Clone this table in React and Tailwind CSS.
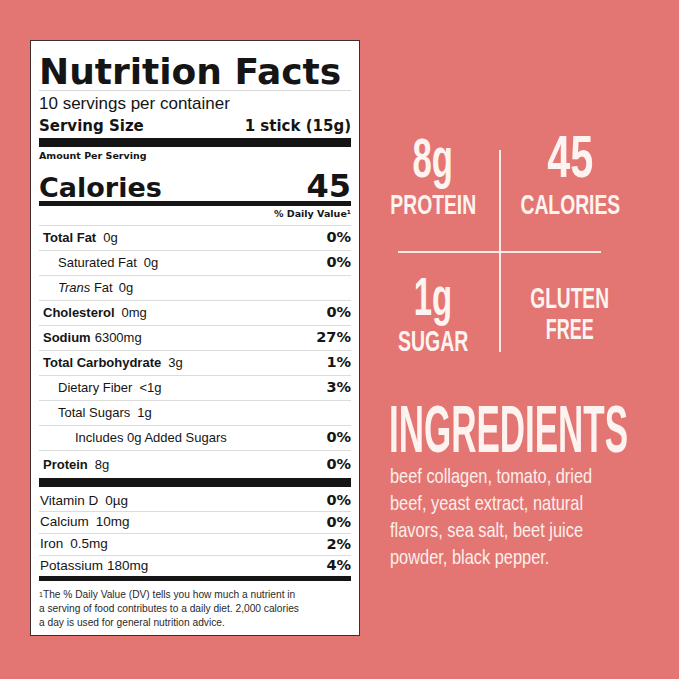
import React from 'react';

const heavy = "font-['DejaVu_Sans',sans-serif] font-bold";
const reg = "font-['Liberation_Sans',Arial,sans-serif]";

const nutrients = [
    { label: 'Total Fat', value: '0g', dv: '0%', bold: true },
    { label: 'Saturated Fat', value: '0g', dv: '0%', indent: 'pl-[19px]' },
    { label: 'Trans', value: '0g', dv: '', indent: 'pl-[19px]', trans: true },
    { label: 'Cholesterol', value: '0mg', dv: '0%', bold: true },
    { label: 'Sodium', value: '6300mg', dv: '27%', bold: true, tight: true },
    { label: 'Total Carbohydrate', value: '3g', dv: '1%', bold: true },
    { label: 'Dietary Fiber', value: '<1g', dv: '3%', indent: 'pl-[19px]' },
    { label: 'Total Sugars', value: '1g', dv: '', indent: 'pl-[19px]' },
    { label: 'Includes 0g Added Sugars', value: '', dv: '0%', indent: 'pl-[36px]' },
];

const vitamins = [
    { label: 'Vitamin D', value: '0µg', dv: '0%', row: 'h-[24px] pt-[4px]' },
    { label: 'Calcium', value: '10mg', dv: '0%', row: 'h-[22px] border-t border-[#dcdcdc]' },
    { label: 'Iron', value: '0.5mg', dv: '2%', row: 'h-[22px] border-t border-[#dcdcdc]' },
    { label: 'Potassium', value: '180mg', dv: '4%', row: 'h-[21px] border-t border-[#dcdcdc]', tight: true },
];

const NutrientRow = ({ item, rowClass }) => (
    <div className={`flex items-center justify-between border-t border-[#dcdcdc] ${rowClass}`}>
        <div className={`${reg} text-[13px] ${item.indent || 'pl-1'}`}>
            {item.trans ? (
                <>
                    <span className="italic">Trans</span> Fat<span className="ml-[6px]">{item.value}</span>
                </>
            ) : (
                <>
                    <span className={item.bold ? 'font-bold' : ''}>{item.label}</span>
                    {item.value && <span className={item.tight ? 'ml-[4px]' : 'ml-[7px]'}>{item.value}</span>}
                </>
            )}
        </div>
        <div className={`${heavy} text-[14.5px]`}>{item.dv}</div>
    </div>
);

const NutritionLabel = () => (
    <div className="w-[330px] h-[596px] shrink-0 border border-[#3d2f2f] bg-white px-2 pt-[13px] text-[#151515]">
        <h1 className={`${heavy} text-[36px] leading-[36px] border-b border-[#d8d8d8]`}>Nutrition Facts</h1>
        <p className={`${reg} text-[17px] leading-[20px] mt-[3px]`}>10 servings per container</p>
        <div className={`${heavy} flex justify-between text-[15px] leading-[18px] mt-[3px]`}>
            <span>Serving Size</span>
            <span>1 stick (15g)</span>
        </div>
        <div className="h-[9px] bg-[#151515] mt-[3px]" />
        <p className={`${heavy} text-[9.5px] leading-[12px] mt-[3px]`}>Amount Per Serving</p>
        <div className={`${heavy} flex justify-between items-baseline mt-[9px]`}>
            <span className="text-[27px] leading-none">Calories</span>
            <span className="text-[32px] leading-[30px]">45</span>
        </div>
        <div className="h-[5px] bg-[#151515]" />
        <p className={`${heavy} text-right text-[9.5px] leading-[12px] mt-[2px]`}>% Daily Value¹</p>

        <div className="mt-[5px]">
            {nutrients.map((n) => (
                <NutrientRow key={n.label} item={n} rowClass="h-[25px]" />
            ))}
            <NutrientRow item={{ label: 'Protein', value: '8g', dv: '0%', bold: true }} rowClass="h-[28px]" />
        </div>
        <div className="h-[9px] bg-[#151515]" />

        {vitamins.map((v) => (
            <div key={v.label} className={`flex items-center justify-between ${v.row}`}>
                <div className={`${reg} text-[13.5px] pl-[1px]`}>
                    {v.label}<span className={v.tight ? 'ml-[4px]' : 'ml-[7px]'}>{v.value}</span>
                </div>
                <div className={`${heavy} text-[14.5px]`}>{v.dv}</div>
            </div>
        ))}
        <div className="h-[5px] bg-[#151515]" />

        <p className={`${reg} text-[10.2px] leading-[14px] mt-[7px] text-[#2a2a2a]`}>
            <span className="text-[7px] align-top">1</span>The % Daily Value (DV) tells you how much a nutrient in<br />
            a serving of food contributes to a daily diet. 2,000 calories<br />
            a day is used for general nutrition advice.
        </p>
    </div>
);

const Highlights = () => (
    <div className={`${reg} font-bold text-[#fdf3f0] ml-[7px] mt-[87px] w-[272px] shrink-0`}>
        <div className="flex h-[124px]">
            <div className="w-[132px] shrink-0 flex flex-col items-center pt-[3px]">
                <span className="text-[56px] leading-none scale-x-[0.62]">8g</span>
                <span className="text-[28px] leading-none mt-[5px] scale-x-[0.69]">PROTEIN</span>
            </div>
            <div className="w-[2px] shrink-0 bg-[#fbe9e6] mt-[23px]" />
            <div className="flex-1 min-w-0 flex flex-col items-center">
                <span className="text-[60px] leading-none scale-x-[0.69]">45</span>
                <span className="text-[28px] leading-none mt-[4px] scale-x-[0.69]">CALORIES</span>
            </div>
        </div>
        <div className="ml-[31px] w-[203px] h-[2px] bg-[#fbe9e6]" />
        <div className="flex h-[104px]">
            <div className="w-[132px] shrink-0 flex flex-col items-center pt-[17px]">
                <span className="text-[53px] leading-none scale-x-[0.62]">1g</span>
                <span className="text-[30px] leading-none mt-[3px] scale-x-[0.65]">SUGAR</span>
            </div>
            <div className="w-[2px] shrink-0 h-[99px] bg-[#fbe9e6]" />
            <div className="flex-1 min-w-0 flex flex-col items-center pt-[30px]">
                <span className="text-[29px] leading-[31px] scale-x-[0.66]">GLUTEN</span>
                <span className="text-[29px] leading-[31px] scale-x-[0.62]">FREE</span>
            </div>
        </div>

        <h2 className="ml-[22px] mt-[39px] text-[66px] leading-none whitespace-nowrap origin-left scale-x-[0.53]">INGREDIENTS</h2>
        <div className="ml-[23px] font-normal text-[21px] leading-[27px] text-[#fcefec]">
            {['beef collagen, tomato, dried', 'beef, yeast extract, natural', 'flavors, sea salt, beet juice', 'powder, black pepper.'].map((line) => (
                <span key={line} className="block whitespace-nowrap origin-left scale-x-[0.78]">{line}</span>
            ))}
        </div>
    </div>
);

const App = () => {
    return (
        <div className="w-[679px] h-[679px] bg-[#e37672] flex items-start pt-[40px] pl-[30px] overflow-hidden">
            <NutritionLabel />
            <Highlights />
        </div>
    );
};

export default App;
